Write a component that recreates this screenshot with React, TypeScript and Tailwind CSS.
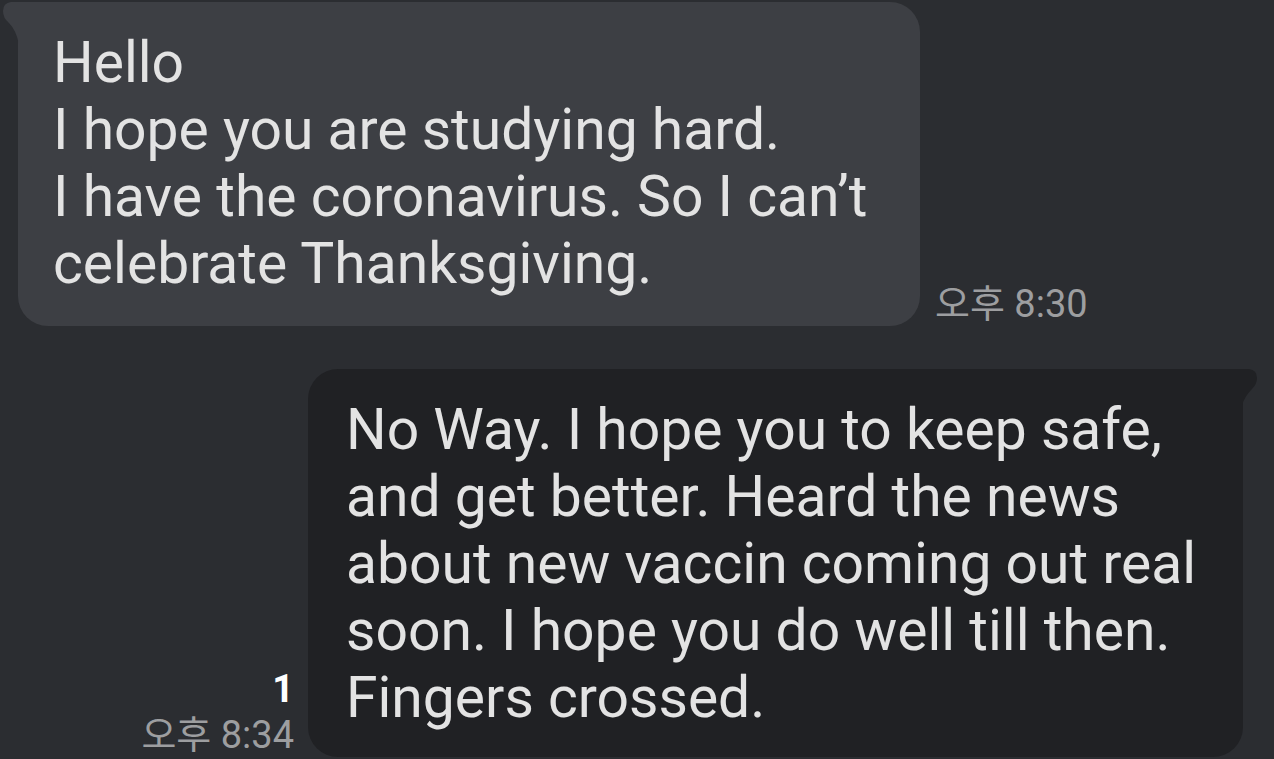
const font = { fontFamily: '"Roboto", "Noto Sans CJK KR", sans-serif' };

export default function App() {
  return (
    <div
      className="w-full h-[759px] overflow-hidden bg-[#2b2d31] text-[#e3e3e3] font-['Roboto','Noto_Sans_CJK_KR',sans-serif]"
      style={font}
    >
      {/* received */}
      <div className="flex items-end pl-[18px] pt-[2px]">
        <div className="relative w-[902px] rounded-[30px] rounded-tl-none bg-[#3d3f44] pl-[35px] pt-[27px] pb-[29px] text-[57px] leading-[67px]">
          <svg
            className="absolute left-[-16px] top-0"
            width="17"
            height="42"
            viewBox="0 0 17 42"
          >
            <path
              d="M17 0 L9 0 Q1 1 1 9 Q1 16 7 21 Q14 28 17 42 Z"
              fill="#3d3f44"
            />
          </svg>
          Hello
          <br />
          I hope you are studying hard.
          <br />
          I have the coronavirus. So I can’t
          <br />
          celebrate Thanksgiving.
        </div>
        <div className="ml-[15px] mb-0 text-[38px] leading-[44px] text-[#9d9ea0]">
          오후 8:30
        </div>
      </div>

      {/* sent */}
      <div className="flex items-end justify-end pr-[31px] mt-[43px]">
        <div className="mr-[14px] mb-0 flex flex-col items-end">
          <div className="text-[38px] leading-[48px] font-bold text-white">1</div>
          <div className="text-[38px] leading-[44px] text-[#9d9ea0]">오후 8:34</div>
        </div>
        <div className="relative w-[935px] rounded-[30px] rounded-tr-none bg-[#202124] pl-[38px] pt-[27px] pb-[26px] text-[57px] leading-[67px]">
          <svg
            className="absolute right-[-15px] top-0"
            width="16"
            height="36"
            viewBox="0 0 16 36"
          >
            <path
              d="M0 0 L7 0 Q15 1 15 9 Q15 15 10 20 Q3 27 0 36 Z"
              fill="#202124"
            />
          </svg>
          No Way. I hope you to keep safe,
          <br />
          and get better. Heard the news
          <br />
          about new vaccin coming out real
          <br />
          soon. I hope you do well till then.
          <br />
          Fingers crossed.
        </div>
      </div>
    </div>
  );
}
